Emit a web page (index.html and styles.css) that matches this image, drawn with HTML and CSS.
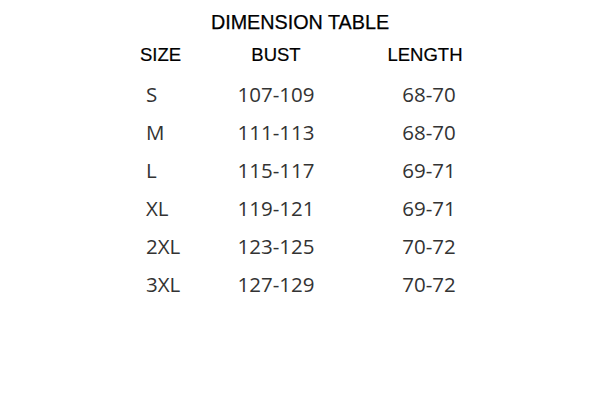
FILE: index.html
```html
<!DOCTYPE html>
<html lang="en">
<head>
<meta charset="utf-8">
<title>Dimension Table</title>
<link rel="stylesheet" href="styles.css">
</head>
<body>
<main class="sheet">
  <h1 class="title">DIMENSION TABLE</h1>
  <div class="table">
    <div class="head size">SIZE</div>
    <div class="head bust">BUST</div>
    <div class="head length">LENGTH</div>

    <div class="cell size">S</div>
    <div class="cell bust">107-109</div>
    <div class="cell length">68-70</div>

    <div class="cell size">M</div>
    <div class="cell bust">111-113</div>
    <div class="cell length">68-70</div>

    <div class="cell size">L</div>
    <div class="cell bust">115-117</div>
    <div class="cell length">69-71</div>

    <div class="cell size">XL</div>
    <div class="cell bust">119-121</div>
    <div class="cell length">69-71</div>

    <div class="cell size">2XL</div>
    <div class="cell bust">123-125</div>
    <div class="cell length">70-72</div>

    <div class="cell size">3XL</div>
    <div class="cell bust">127-129</div>
    <div class="cell length">70-72</div>
  </div>
</main>
</body>
</html>
```
FILE: styles.css
```css
html, body {
  margin: 0;
  padding: 0;
  background: #ffffff;
}

.sheet {
  width: 600px;
  height: 403px;
  padding-top: 12px;
  box-sizing: border-box;
}

.title {
  margin: 0;
  font-family: "Liberation Sans", Arial, sans-serif;
  font-weight: 400;
  font-size: 19.75px;
  line-height: 20px;
  color: #000000;
  text-align: center;
  -webkit-text-stroke: 0.25px #000000;
}

.table {
  display: grid;
  grid-template-columns: 96px 80px 218px;
  grid-auto-rows: 38px;
  margin: 13px 0 0 140px;
}

.head {
  font-family: "Liberation Sans", Arial, sans-serif;
  font-size: 18.5px;
  line-height: 20px;
  color: #000000;
  -webkit-text-stroke: 0.2px #000000;
}

.cell {
  font-family: "Open Sans", "Noto Sans", sans-serif;
  font-size: 20.5px;
  line-height: 22px;
  color: #333333;
}

.head.size { text-align: left; }
.head.bust, .head.length { text-align: center; white-space: nowrap; }

.cell.size { padding-left: 6px; }
.cell.bust { text-align: center; white-space: nowrap; }
.cell.length { text-align: center; padding-left: 8px; }
```
